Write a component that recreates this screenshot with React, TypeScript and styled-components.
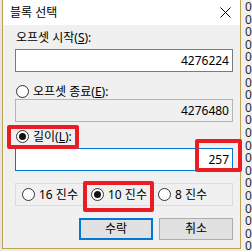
import React from "react";
import styled, { createGlobalStyle } from "styled-components";

const Global = createGlobalStyle`
  html, body { margin: 0; padding: 0; background: #f0f0f0; }
  body { font-family: "Noto Sans", "Noto Sans CJK KR", sans-serif; font-size: 12px; color: #000; }
  * { box-sizing: border-box; }
`;

const Page = styled.div`
  position: relative;
  display: flex;
  width: 252px;
  height: 251px;
  overflow: hidden;
  background: #ececec;
`;

const LeftStrip = styled.div`
  width: 2px;
  flex: none;
  background: #e6e6e6;
`;

const Window = styled.div`
  width: 239px;
  height: 249px;
  flex: none;
  display: flex;
  flex-direction: column;
  border: 1px solid #bfa152;
  border-top: none;
  background: #f0f0f0;
`;

const TitleBar = styled.div`
  height: 25px;
  flex: none;
  display: flex;
  align-items: center;
  justify-content: space-between;
  padding: 0 9px 0 7px;
  background: #ffffff;
  line-height: 16px;
`;

const Body = styled.div`
  display: flex;
  flex-direction: column;
  padding: 0 6px 0 12px;
`;

const Label = styled.div<{ $mt: number }>`
  margin-top: ${(p) => p.$mt}px;
  height: 16px;
  line-height: 16px;
  padding-left: 1px;
  white-space: nowrap;
`;

const TextBox = styled.div<{ $mt: number; $variant?: "normal" | "readonly" | "focus" }>`
  margin-top: ${(p) => p.$mt}px;
  height: 23px;
  width: 218px;
  display: flex;
  align-items: center;
  justify-content: flex-end;
  padding-right: 3px;
  line-height: 16px;
  background: ${(p) => (p.$variant === "readonly" ? "#f0f0f0" : "#ffffff")};
  border: 1px solid
    ${(p) =>
      p.$variant === "focus" ? "#0078d7" : p.$variant === "readonly" ? "#b4b4b4" : "#7a7a7a"};
`;

const RadioRow = styled.label<{ $mt?: number }>`
  margin-top: ${(p) => p.$mt ?? 0}px;
  height: 15px;
  display: flex;
  align-items: center;
  gap: 4px;
  line-height: 15px;
  white-space: nowrap;
`;

const RadioWrap = styled(RadioRow)`
  margin-left: 1px;
`;

const Circle = styled.span<{ $checked?: boolean }>`
  width: 13px;
  height: 13px;
  flex: none;
  border-radius: 50%;
  border: 1px solid #333333;
  background: #ffffff;
  display: flex;
  align-items: center;
  justify-content: center;
  &::after {
    content: "";
    display: ${(p) => (p.$checked ? "block" : "none")};
    width: 7px;
    height: 7px;
    border-radius: 50%;
    background: #111111;
  }
`;

const GroupBox = styled.div`
  margin-top: 12px;
  width: 218px;
  height: 23px;
  border: 1px solid #dcdcdc;
  display: grid;
  grid-template-columns: 69px 67px auto;
  align-items: center;
  padding-left: 6px;
`;

const Buttons = styled.div`
  margin-top: 12px;
  display: flex;
  justify-content: flex-end;
  gap: 6px;
  padding-right: 1px;
`;

const Button = styled.div<{ $focus?: boolean }>`
  width: 74px;
  height: 22px;
  display: flex;
  align-items: center;
  justify-content: center;
  background: #e1e1e1;
  border: ${(p) => (p.$focus ? "2px solid #0078d7" : "1px solid #adadad")};
  line-height: 16px;
`;

const RightStrip = styled.div`
  flex: 1;
  background: #f0f0f0;
  overflow: hidden;
  padding: 1px 0 0 4px;
  font-size: 12px;
  line-height: 12.6px;
  color: #2a2a2a;
  white-space: pre;
`;

const Highlight = styled.div<{ $x: number; $y: number; $w: number; $h: number }>`
  position: absolute;
  left: ${(p) => p.$x}px;
  top: ${(p) => p.$y}px;
  width: ${(p) => p.$w}px;
  height: ${(p) => p.$h}px;
  border: 4px solid #ec1c24;
  border-radius: 2px;
  pointer-events: none;
`;

const CloseIcon = () => (
  <svg width="11" height="11" viewBox="0 0 11 11">
    <path d="M0.5 0.5 L10.5 10.5 M10.5 0.5 L0.5 10.5" stroke="#000" strokeWidth="1" fill="none" />
  </svg>
);

export default function App() {
  const zeros = Array.from({ length: 21 }, () => "0").join("\n");
  return (
    <>
      <Global />
      <Page>
        <LeftStrip />
        <Window>
          <TitleBar>
            <span>블록 선택</span>
            <CloseIcon />
          </TitleBar>
          <Body>
            <Label $mt={5}>
              오프셋 시작(<u>S</u>):
            </Label>
            <TextBox $mt={3}>4276224</TextBox>
            <RadioWrap $mt={12}>
              <Circle />
              <span>
                오프셋 종료(<u>E</u>):
              </span>
            </RadioWrap>
            <TextBox $mt={0} $variant="readonly">
              4276480
            </TextBox>
            <RadioWrap $mt={7}>
              <Circle $checked />
              <span>
                길이(<u>L</u>):
              </span>
            </RadioWrap>
            <TextBox $mt={4} $variant="focus">
              257
            </TextBox>
            <GroupBox>
              <RadioRow>
                <Circle />
                <span>16 진수</span>
              </RadioRow>
              <RadioRow>
                <Circle $checked />
                <span>10 진수</span>
              </RadioRow>
              <RadioRow>
                <Circle />
                <span>8 진수</span>
              </RadioRow>
            </GroupBox>
            <Buttons>
              <Button $focus>수락</Button>
              <Button>취소</Button>
            </Buttons>
          </Body>
        </Window>
        <RightStrip>{zeros}</RightStrip>
        <Highlight $x={7} $y={125} $w={72} $h={24} />
        <Highlight $x={195} $y={139} $w={47} $h={33} />
        <Highlight $x={83} $y={181} $w={71} $h={31} />
      </Page>
    </>
  );
}
